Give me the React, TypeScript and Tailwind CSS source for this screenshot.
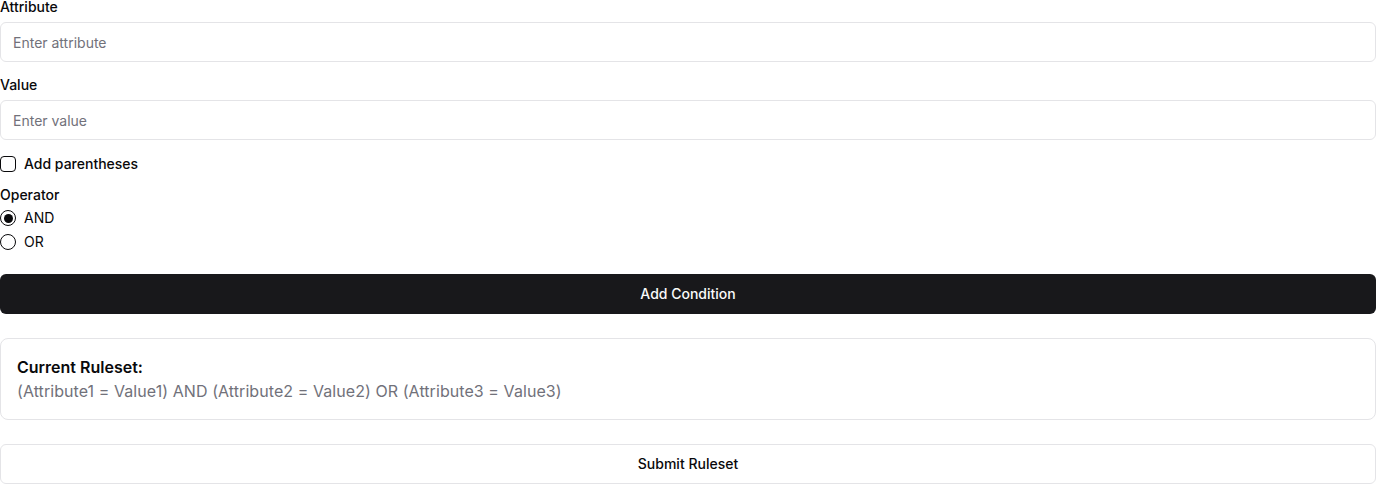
import React, { useState } from "react";

export default function App() {
  const [op, setOp] = useState("AND");
  return (
    <div className="w-[1376px] bg-white text-[#09090b]" style={{ fontFamily: "Inter, 'Noto Sans', sans-serif" }}>
      <div className="flex flex-col">
        <div className="flex flex-col gap-2">
          <label className="text-sm font-medium leading-none">Attribute</label>
          <input
            className="h-10 w-full rounded-md border border-[#e4e4e7] bg-white px-3 text-sm placeholder:text-[#71717a] outline-none"
            placeholder="Enter attribute"
          />
        </div>
        <div className="mt-4 flex flex-col gap-2">
          <label className="text-sm font-medium leading-none">Value</label>
          <input
            className="h-10 w-full rounded-md border border-[#e4e4e7] bg-white px-3 text-sm placeholder:text-[#71717a] outline-none"
            placeholder="Enter value"
          />
        </div>
        <div className="mt-4 flex items-center gap-2 h-4">
          <span className="h-4 w-4 rounded-[4px] border border-[#09090b] bg-white" />
          <span className="text-sm font-medium leading-none">Add parentheses</span>
        </div>
        <div className="mt-4 flex flex-col">
          <span className="text-sm font-medium leading-none">Operator</span>
          <div className="mt-2 flex flex-col gap-2">
            {["AND", "OR"].map((o) => (
              <label key={o} className="flex items-center gap-2 h-4 cursor-pointer" onClick={() => setOp(o)}>
                <span className="flex h-4 w-4 items-center justify-center rounded-full border border-[#09090b] bg-white">
                  {op === o && <span className="h-[9px] w-[9px] rounded-full bg-[#09090b]" />}
                </span>
                <span className="text-sm leading-none">{o}</span>
              </label>
            ))}
          </div>
        </div>
        <button className="mt-6 h-10 w-full rounded-md bg-[#18181b] text-sm font-medium text-[#fafafa]">
          Add Condition
        </button>
        <div className="mt-6 rounded-lg border border-[#e4e4e7] bg-white p-4">
          <h3 className="text-base font-semibold leading-6">Current Ruleset:</h3>
          <p className="text-base leading-6 tracking-[0.07px] text-[#71717a]">
            (Attribute1 = Value1) AND (Attribute2 = Value2) OR (Attribute3 = Value3)
          </p>
        </div>
        <button className="mt-6 h-10 w-full rounded-md border border-[#e4e4e7] bg-white text-sm font-medium text-[#09090b]">
          Submit Ruleset
        </button>
      </div>
    </div>
  );
}
